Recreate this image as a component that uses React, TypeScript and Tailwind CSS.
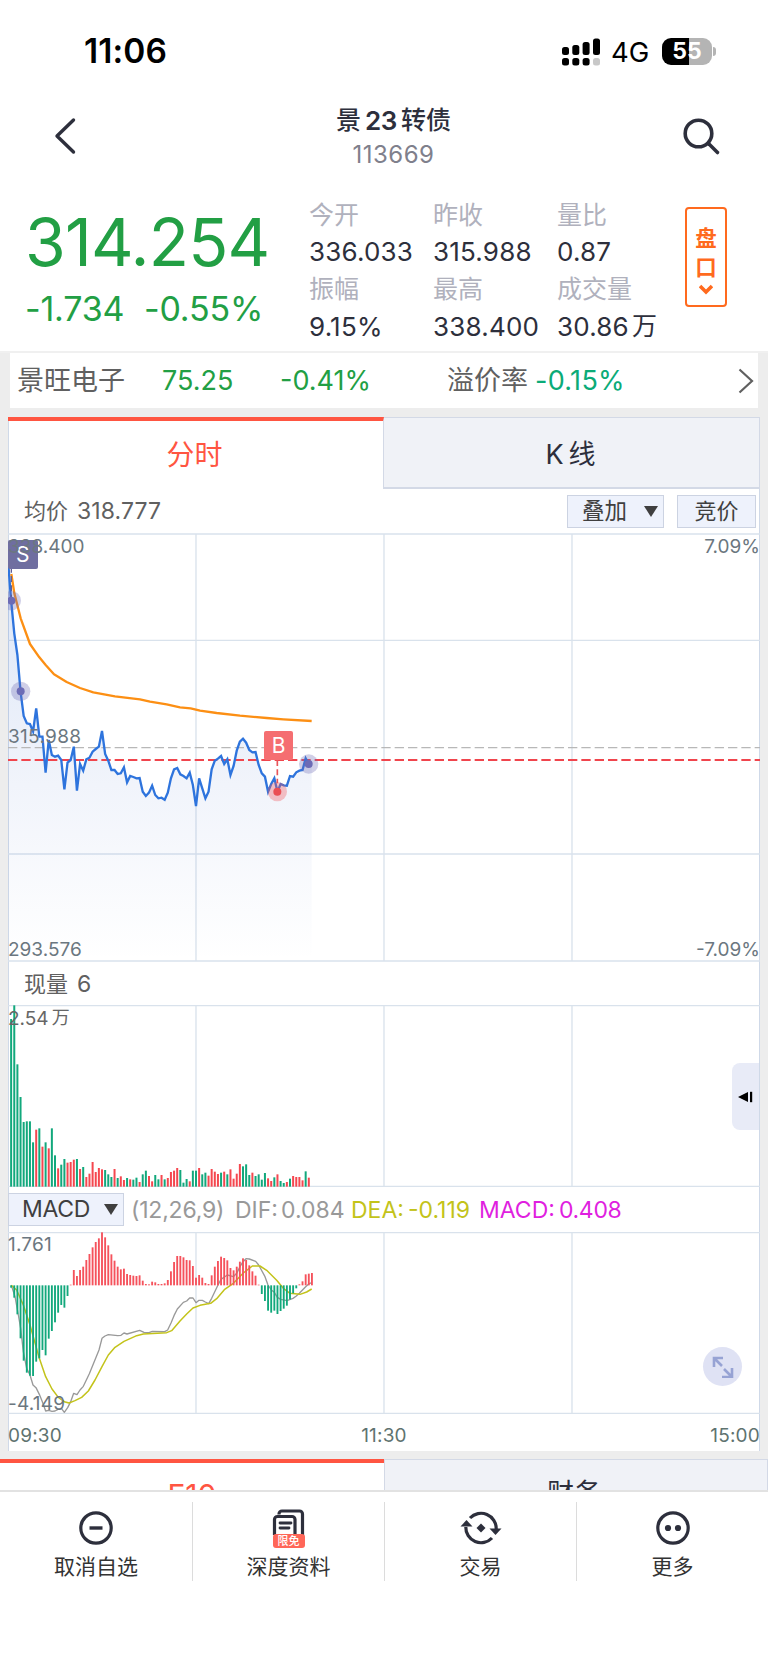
import React from "react";

// Each minute of the session is 9.4 units wide in the chart viewBoxes (3 units = 1px)
const STEP = 9.4;
const LEFT = 24;
const minuteX = (i: number) => +(LEFT + STEP * i).toFixed(1);

const priceData = [
  90, 212, 310, 375, 484, 558, 580, 582, 604, 535, 620, 620, 728, 630, 675, 680, 677, 690, 778, 698,
  690, 650, 782, 702, 722, 688, 683, 665, 657, 650, 603, 672, 692, 720, 720, 732, 730, 712, 757, 738,
  741, 745, 744, 785, 798, 788, 767, 795, 805, 803, 809, 788, 745, 718, 714, 733, 738, 745, 728, 765,
  828, 745, 775, 805, 785, 718, 692, 686, 678, 702, 688, 735, 708, 662, 635, 626, 638, 660, 667, 666,
  705, 730, 740, 785, 762, 745, 785, 762, 766, 767, 738, 740, 727, 722, 720, 685, 702,
];

const averageLine =
  "34,132 43,190 62,265 90,342 118,382 137,405 162,433 200,456 240,474 280,487 345,499 420,508 450,515 500,523 540,532 572,535 600,542 650,549 720,557 800,564 850,568 935,573";

// Tops of the volume bars, starting at the first minute
const volumeData = [
  238, 197, 374, 472, 547, 545, 545, 608, 570, 566, 621, 608, 626, 566, 647, 686, 675, 658, 669, 667,
  660, 658, 688, 682, 712, 702, 667, 697, 685, 689, 691, 704, 712, 688, 715, 710, 721, 715, 719, 720,
  714, 727, 704, 693, 709, 725, 706, 719, 706, 719, 715, 697, 693, 685, 691, 729, 718, 725, 693, 693,
  685, 704, 699, 708, 688, 696, 703, 699, 696, 704, 689, 717, 702, 673, 680, 674, 706, 699, 709, 704,
  720, 700, 716, 724, 713, 704, 724, 730, 727, 717, 709, 712, 712, 722, 695, 714,
];
const volumeSides =
  "ggggggggrgrgrggrggrrrgrgrrrrrrgggrgrrgrggrggrrggrgrrrrggg" +
  "rggrggrrrrgrgrrrrgggrggggrrgrggrgrrrrg";

// Ends of the MACD bars, measured from the zero line at 301
const macdData = [
  308, 338, 388, 460, 527, 563, 572, 573, 530, 520, 495, 511, 461, 438, 412, 383, 360, 368, 333, 299,
  255, 273, 255, 245, 225, 207, 187, 171, 160, 142, 157, 181, 208, 227, 245, 253, 251, 267, 270, 272,
  273, 271, 287, 297, 298, 290, 292, 297, 297, 295, 285, 259, 231, 213, 213, 217, 225, 226, 243, 278,
  270, 278, 294, 297, 271, 245, 228, 215, 219, 226, 249, 256, 245, 230, 220, 225, 241, 259, 272, 299,
  327, 348, 377, 383, 377, 387, 378, 371, 362, 343, 325, 310, 298, 289, 268, 266, 264,
];

const difLine =
  "34,301 45,335 55,390 62,430 70,500 80,550 90,570 99,600 108,608 118,628 127,650 137,678 146,676 156,679 165,678 174,673 184,670 193,682 203,668 212,650 221,625 231,629 240,615 250,604 259,585 268,566 297,495 306,460 315,453 325,449 353,452 363,451 372,444 381,447 419,436 432,442 447,443 457,439 494,440 503,435 513,414 522,392 532,372 550,352 560,348 569,339 579,339 588,353 597,346 607,346 616,351 626,356 635,340 654,300 663,283 682,270 700,275 710,265 720,245 729,230 738,221 748,222 767,229 776,240 795,275 804,300 814,315 823,322 832,337 842,343 861,347 879,340 889,333 898,325 917,305 926,297 935,293";

const deaLine =
  "34,301 50,315 70,360 90,420 118,520 137,575 156,612 175,637 193,650 207,654 225,647 245,637 265,618 285,585 306,545 325,510 345,487 372,469 410,452 430,447 500,443 515,437 540,408 560,387 579,369 600,361 632,355 650,341 673,314 700,295 730,264 757,243 780,243 800,256 830,286 850,310 870,325 900,328 920,321 935,312";

const quotes = [
  { label: "今开", value: "336.033" },
  { label: "昨收", value: "315.988" },
  { label: "量比", value: "0.87" },
  { label: "振幅", value: "9.15%" },
  { label: "最高", value: "338.400" },
  { label: "成交量", value: "30.86", unit: "万" },
];

const StatusBar = () => (
  <div className="flex h-[103px] items-center pl-[84px] text-black">
    <span className="w-[478px] text-[33.5px] leading-none font-semibold tracking-[0.1px]">11:06</span>
    <svg className="h-[28px] w-[39px]" viewBox="0 0 39 28">
      <rect x="0" y="9" width="7" height="8" rx="2.5" />
      <rect x="10.3" y="7" width="7" height="10" rx="2.5" />
      <rect x="20.6" y="4" width="7" height="13" rx="2.5" />
      <rect x="31" y="0.5" width="7" height="16.5" rx="2.5" />
      <rect x="0" y="20" width="7" height="7.5" rx="2.5" />
      <rect x="10.3" y="20" width="7" height="7.5" rx="2.5" />
      <rect x="20.6" y="20" width="7" height="7.5" rx="2.5" />
      <rect x="31" y="20" width="7" height="7.5" rx="2.5" fill="#c8c8c8" />
    </svg>
    <span className="ml-[10px] w-[51px] pt-[2px] text-[27.5px] leading-none">4G</span>
    <div className="flex h-[27px] w-[50px] items-center justify-center rounded-[9px] bg-[linear-gradient(to_right,#000_54%,#b4b4b4_54%)]">
      <span className="text-[23px] leading-none font-bold text-white">55</span>
    </div>
    <div className="ml-px h-[9px] w-[3px] rounded-r-full bg-[#b4b4b4]" />
  </div>
);

const TitleBar = () => (
  <div className="flex h-[91px] items-start justify-between pr-[47px] pl-[53px] text-[#2d2f3c]">
    <svg className="mt-[13px] h-[40px] w-[26px]" viewBox="0 0 26 40" fill="none" stroke="currentColor" strokeWidth="3.4" strokeLinecap="round" strokeLinejoin="round">
      <path d="M20.5 4L4 20L20.5 36" />
    </svg>
    <div className="ml-[27px] flex flex-col items-center pt-[4px]">
      <h1 className="flex h-[27px] items-center text-[25px] leading-none font-medium">
        景<span className="mx-[4px] text-[26px] font-semibold tracking-[-0.4px]">23</span>转债
      </h1>
      <span className="mt-[9px] text-[24px] leading-none tracking-[0.5px] text-[#7f808c]">113669</span>
    </div>
    <svg className="mt-[13px] h-[40px] w-[40px]" viewBox="0 0 40 40" fill="none" stroke="currentColor" strokeWidth="3.6" strokeLinecap="round">
      <circle cx="17.5" cy="17.5" r="13.3" />
      <path d="M28 28L36.5 36.5" />
    </svg>
  </div>
);

const Summary = () => (
  <div className="flex h-[157px]">
    <div className="w-[309px] pt-[15px] pl-[25px] text-[#229f44]">
      <div className="text-[66px] leading-none tracking-[-0.8px]">314.254</div>
      <div className="mt-[17px] flex text-[34px] leading-none tracking-[-0.2px]">
        <span className="w-[119px] whitespace-nowrap">-1.734</span>
        <span>-0.55%</span>
      </div>
    </div>
    <div className="grid h-[150px] w-[376px] grid-cols-[124px_124px_128px] grid-rows-2 pt-px">
      {quotes.map((q) => (
        <div key={q.label} className="flex h-[75px] flex-col">
          <span className="flex h-[39px] items-center pt-px text-[25px] leading-none text-[#b0b1bd]">{q.label}</span>
          <span className="flex h-[36px] items-center text-[26px] leading-none tracking-[0.2px] text-[#2d2f3c]">
            {q.value}
            {q.unit && <span className="ml-[3px] text-[25px]">{q.unit}</span>}
          </span>
        </div>
      ))}
    </div>
    <div className="mt-[13px] flex h-[100px] w-[42px] flex-col items-center rounded-[4px] border-2 border-[#ff6a1e] pt-[15px] text-[21.5px] leading-[29px] font-bold text-[#ff6a1e]">
      <span className="h-[28.5px]">盘</span>
      <span className="h-[28.5px]">口</span>
      <svg className="mt-[3px] h-[11px] w-[14px]" viewBox="0 0 14 11" fill="none" stroke="currentColor" strokeWidth="3.6">
        <path d="M1 2L7 8L13 2" />
      </svg>
    </div>
  </div>
);

const StockRow = () => (
  <div className="border-t-2 border-[#f0f0f0] pr-[10px] pl-[10px]">
    <div className="flex h-[55px] items-center bg-white pl-[7px] text-[27px] leading-none text-[#229f44]">
      <span className="w-[145px] text-[#606060]">景旺电子</span>
      <span className="w-[118px]">75.25</span>
      <span className="w-[167px]">-0.41%</span>
      <span className="w-[88px] text-[#606060]">溢价率</span>
      <span className="w-[203px] tracking-[0.3px] text-[#0bab78]">-0.15%</span>
      <svg className="h-[26px] w-[16px]" viewBox="0 0 16 26" fill="none" stroke="#606060" strokeWidth="2.2">
        <path d="M1.5 1.5L14 13L1.5 24.5" />
      </svg>
    </div>
  </div>
);

const Triangle = () => (
  <svg className="h-[11px] w-[14px]" viewBox="0 0 14 11" fill="#3f3f3f">
    <path d="M0 0H14L7 11Z" />
  </svg>
);

type GridProps = { top: number; bottom: number; rows?: number[] };

const Grid = ({ top, bottom, rows = [] }: GridProps) => (
  <g stroke="#d9e2ec">
    {[588, 1152, 1716].map((x) => (
      <line key={x} x1={x} x2={x} y1={top} y2={bottom} strokeWidth="4" />
    ))}
    {[top, bottom, ...rows].map((y) => (
      <line key={y} x1="24" x2="2280" y1={y} y2={y} strokeWidth="4" />
    ))}
  </g>
);

const PriceChart = () => {
  const line = priceData.map((y, i) => `${minuteX(i)},${y}`).join(" ");
  return (
    <div className="relative h-[429px] text-[19px] leading-none text-[#6b7780]">
      <svg className="block h-full w-full" viewBox="24 9 2256 1287">
        <defs>
          <linearGradient id="area" x1="0" y1="0" x2="0" y2="1">
            <stop offset="0" stopColor="#2e74dd" stopOpacity="0.18" />
            <stop offset="0.55" stopColor="#3f68c8" stopOpacity="0.075" />
            <stop offset="1" stopColor="#3f68c8" stopOpacity="0" />
          </linearGradient>
        </defs>
        <Grid top={12} bottom={1293} rows={[331, 972]} />
        <polygon points={`24,1293 ${line} 935,700 935,1293`} fill="url(#area)" />
        <line x1="24" x2="2280" y1="653" y2="653" stroke="#b8b8b8" strokeWidth="4" strokeDasharray="28 12" />
        <line x1="24" x2="2280" y1="690" y2="690" stroke="#f0454d" strokeWidth="6" strokeDasharray="28 12" />
        <polyline points={line} fill="none" stroke="#2e74dd" strokeWidth="7" />
        <polyline points={averageLine} fill="none" stroke="#fc8f14" strokeWidth="7" strokeLinejoin="round" />
        <g fill="#6c6bb5">
          {[[34, 212], [62, 484], [926, 702]].map(([x, y]) => (
            <g key={x}>
              <circle cx={x} cy={y} r="29" opacity="0.32" />
              <circle cx={x} cy={y} r="12" />
            </g>
          ))}
        </g>
        <line x1="34" x2="34" y1="110" y2="200" stroke="#5f5e96" strokeWidth="4" strokeDasharray="18 10" />
        <line x1="832" x2="832" y1="690" y2="760" stroke="#e8555a" strokeWidth="5" strokeDasharray="18 10" />
        <circle cx="832" cy="785" r="29" fill="#f0555c" opacity="0.35" />
        <circle cx="832" cy="785" r="12" fill="#ea4f54" />
      </svg>
      <span className="absolute top-[7px] left-0 flex h-[29px] w-[29.5px] items-center justify-center rounded-[2px] bg-[#6f6ea0] text-[21px] text-white">S</span>
      <span className="absolute top-[198px] left-[256px] flex h-[29px] w-[29px] items-center justify-center rounded-[2px] bg-[#f56e71] text-[21px] text-white">B</span>
      <span className="absolute top-[3.5px] left-0">338.400</span>
      <span className="absolute top-[194px] left-0 tracking-[0.3px]">315.988</span>
      <span className="absolute top-[406.5px] left-0">293.576</span>
      <span className="absolute top-[3.5px] right-0">7.09%</span>
      <span className="absolute top-[406.5px] right-0">-7.09%</span>
    </div>
  );
};

const VolumeChart = () => (
  <div className="relative h-[182px] text-[19px] leading-none text-[#666]">
    <svg className="block h-full w-full" viewBox="24 196 2256 546">
      <Grid top={198} bottom={740} />
      {volumeData.map((y, i) => (
        <rect key={i} x={minuteX(i + 1) - 3} y={y} width="6" height={741 - y} fill={volumeSides[i] === "g" ? "#12a87c" : "#f5474f"} />
      ))}
    </svg>
    <span className="absolute top-[4px] left-0 flex">
      2.54<span className="ml-[3px] text-[18px]">万</span>
    </span>
  </div>
);

const MacdChart = () => (
  <div className="relative h-[182px] text-[19px] leading-none tracking-[0.2px] text-[#6b7780]">
    <svg className="block h-full w-full" viewBox="24 141 2256 546">
      <Grid top={143} bottom={685} />
      <polyline points={difLine} fill="none" stroke="#999" strokeWidth="4" strokeLinejoin="round" />
      <polyline points={deaLine} fill="none" stroke="#c3c31a" strokeWidth="4.5" strokeLinejoin="round" />
      {macdData.map((y, i) => (
        <rect
          key={i}
          x={minuteX(i + 1) - 2.8}
          y={Math.min(y, 301)}
          width="5.6"
          height={Math.abs(y - 301)}
          fill={y > 301 ? "#12a87c" : "#f5525c"}
        />
      ))}
    </svg>
    <span className="absolute top-[3px] left-0">1.761</span>
    <span className="absolute top-[162px] left-0">-4.149</span>
    <span className="absolute top-[115px] right-[18px] flex size-[39px] items-center justify-center rounded-full bg-[#dfe2f4]">
      <svg className="size-[22px]" viewBox="0 0 22 22" fill="none" stroke="#97a3d4" strokeWidth="2.6">
        <path d="M2 11V2H11M2 2L10 10" />
        <path d="M20 12V21H10M20 21L12 13" />
      </svg>
    </span>
  </div>
);

const ChartPanel = () => (
  <section className="relative mx-[8px] mt-[9px] h-[1034px] border-x border-[#cfd9e8] bg-white">
    <div className="-mx-px flex h-[72px]">
      <div className="flex w-[376px] items-center justify-center border-t-4 border-r border-t-[#ff5541] border-r-[#d3d9e6] pr-[2px] text-[28px] leading-none text-[#ff5541]">分时</div>
      <div className="flex flex-1 items-center justify-center border border-b-2 border-l-0 border-[#d3d9e6] bg-[#f0f2f7] pt-[3px] pr-[2px] text-[27px] leading-none text-[#2d2f3c]">
        K<span className="ml-[5px]">线</span>
      </div>
    </div>
    <div className="flex h-[44px] items-center pr-[3px] pl-[15px] text-[22px] leading-none text-[#606060]">
      <span className="w-[53px]">均价</span>
      <span className="flex-1 pt-px text-[23px] tracking-[0.1px]">318.777</span>
      <div className="flex h-[33px] w-[97px] items-center justify-between border border-[#ccd3e2] bg-[#eef2fc] pr-[5px] pl-[14px] text-[22.5px] text-[#3f3f3f]">
        叠加
        <Triangle />
      </div>
      <div className="ml-[13px] flex h-[33px] w-[79px] items-center justify-center border border-[#ccd3e2] bg-[#eef2fc] text-[#3f3f3f]">竞价</div>
    </div>
    <div className="-mx-px">
      <PriceChart />
      <div className="flex h-[43px] items-center pl-[16px] text-[22px] leading-none text-[#606060]">
        现量<span className="ml-[9px] pt-px text-[23px]">6</span>
      </div>
      <VolumeChart />
      <div className="flex h-[45px] items-center text-[23px] leading-none">
        <div className="flex h-[33px] w-[116px] items-center justify-between border border-[#ccd3e2] bg-[#eef2fc] pr-[5px] pl-[13px] tracking-[-0.3px] text-[#3f3f3f]">
          MACD
          <Triangle />
        </div>
        <span className="ml-[7px] w-[104px] pt-[2px] tracking-[-0.2px] text-[#999]">(12,26,9)</span>
        <span className="flex w-[116px] pt-[2px] text-[#999]">
          DIF:<span className="ml-[3px]">0.084</span>
        </span>
        <span className="flex w-[128px] pt-[2px] text-[#c3c31a]">
          DEA:<span className="ml-[4px] whitespace-nowrap">-0.119</span>
        </span>
        <span className="flex pt-[2px] text-[#e01fe0]">
          MACD:<span className="ml-[4px] tracking-[-0.3px]">0.408</span>
        </span>
      </div>
      <MacdChart />
      <div className="grid h-[37px] grid-cols-3 items-center pt-[5px] text-[19px] leading-none tracking-[0.2px] text-[#5f7370]">
        <span>09:30</span>
        <span className="text-center">11:30</span>
        <span className="text-right">15:00</span>
      </div>
    </div>
    <div className="absolute top-[646px] right-0 flex h-[67px] w-[27px] items-center justify-center rounded-l-[8px] bg-[#e8ebf7]">
      <svg className="h-[12px] w-[15px]" viewBox="0 0 15 12">
        <path d="M0 6L10 1V11Z" />
        <rect x="12" y="0.8" width="2.2" height="10.4" />
      </svg>
    </div>
  </section>
);

const BottomTabs = () => (
  <div className="mt-[8px] flex h-[31px] overflow-hidden text-[30px] leading-none">
    <div className="h-[72px] w-1/2 border-t-4 border-[#ff5541] bg-white pt-[17px] text-center text-[#ff5541]">F10</div>
    <div className="h-[72px] w-1/2 border border-[#d3d9e6] bg-[#f0f2f7] pt-[20px] pr-[4px] text-center text-[27px] text-[#2d2f3c]">财务</div>
  </div>
);

const iconProps = {
  viewBox: "0 0 42 42",
  fill: "none",
  stroke: "#2d2f3c",
  strokeWidth: 3.2,
};

const actions = [
  {
    label: "取消自选",
    icon: (
      <svg className="size-[42px]" {...iconProps}>
        <circle cx="21" cy="21" r="15.2" />
        <path d="M14.5 21H27.5" strokeWidth="3.4" />
      </svg>
    ),
  },
  {
    label: "深度资料",
    badge: "限免",
    icon: (
      <svg className="size-[42px]" {...iconProps}>
        <path d="M11 7.5V7a3 3 0 0 1 3-3H31.5a3 3 0 0 1 3 3V30" />
        <path d="M6.5 28V12.5a3 3 0 0 1 3-3H24a3 3 0 0 1 3 3V28" />
        <path d="M12 16H23M12 21H21" strokeLinecap="round" strokeWidth="2.8" />
      </svg>
    ),
  },
  {
    label: "交易",
    icon: (
      <svg className="size-[42px]" {...iconProps}>
        <path d="M10 11A15.2 15.2 0 0 1 36.2 22" />
        <path d="M32 31A15.2 15.2 0 0 1 5.8 20" />
        <path d="M29.5 21.5H41.5L35.5 28Z" fill="#2d2f3c" stroke="none" />
        <path d="M0.5 19.5H12.5L6.5 13Z" fill="#2d2f3c" stroke="none" />
        <path d="M21 16.5L25.5 21L21 25.5L16.5 21Z" fill="#2d2f3c" stroke="none" />
      </svg>
    ),
  },
  {
    label: "更多",
    icon: (
      <svg className="size-[42px]" {...iconProps}>
        <circle cx="21" cy="21" r="15.2" />
        <circle cx="16" cy="21" r="3.1" fill="#2d2f3c" stroke="none" />
        <circle cx="26" cy="21" r="3.1" fill="#2d2f3c" stroke="none" />
      </svg>
    ),
  },
];

const BottomNav = () => (
  <nav className="grid h-[173px] grid-cols-4 items-start border-t-2 border-[#e2e2e2] bg-white pt-[10px]">
    {actions.map((a, i) => (
      <div key={a.label} className={i > 0 ? "h-[79px] border-l border-[#dcdcdc]" : "h-[79px]"}>
        <div className="flex flex-col items-center pt-[5px]">
          <div className="relative">
            {a.icon}
            {a.badge && (
              <span className="absolute top-[27px] left-[5px] flex h-[14px] w-[32px] items-center justify-center rounded-[3px] bg-[#ff6658] text-[11px] leading-none font-medium text-white">
                {a.badge}
              </span>
            )}
          </div>
          <span className="mt-[7px] text-[21px] leading-none text-[#333]">{a.label}</span>
        </div>
      </div>
    ))}
  </nav>
);

const App = () => {
  return (
    <div className="h-[1663px] w-[768px] overflow-hidden bg-[#ededed] font-['Inter','Noto_Sans_CJK_SC',sans-serif]">
      <header className="bg-white">
        <StatusBar />
        <TitleBar />
        <Summary />
      </header>
      <StockRow />
      <ChartPanel />
      <BottomTabs />
      <BottomNav />
    </div>
  );
};

export default App;
